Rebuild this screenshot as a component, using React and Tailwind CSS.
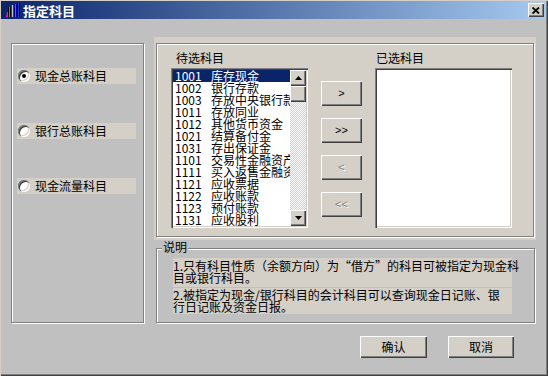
import React from "react";

const FONT = { fontFamily: '"Noto Sans CJK SC", "Liberation Sans", sans-serif' };

const raised =
  "bg-[#d4d0c8] shadow-[inset_1px_1px_0_#ffffff,inset_-1px_-1px_0_#404040,inset_-2px_-2px_0_#808080]";
const sunken =
  "shadow-[inset_1px_1px_0_#808080,inset_2px_2px_0_#404040,inset_-1px_-1px_0_#ffffff,inset_-2px_-2px_0_#d4d0c8]";
const etched = "border border-[#808080] shadow-[inset_1px_1px_0_#ffffff,1px_1px_0_#ffffff]";

const items = [
  ["1001", "库存现金"],
  ["1002", "银行存款"],
  ["1003", "存放中央银行款项"],
  ["1011", "存放同业"],
  ["1012", "其他货币资金"],
  ["1021", "结算备付金"],
  ["1031", "存出保证金"],
  ["1101", "交易性金融资产"],
  ["1111", "买入返售金融资产"],
  ["1121", "应收票据"],
  ["1122", "应收账款"],
  ["1123", "预付账款"],
  ["1131", "应收股利"],
];

function Radio({ checked, label }) {
  return (
    <div className="flex items-center h-[16px] w-[119px] bg-[#d4d0c8] pl-[1px]">
      <div
        className={`w-[12px] h-[12px] rounded-full bg-white flex items-center justify-center ${sunken}`}
      >
        {checked && <div className="w-[4px] h-[4px] rounded-full bg-black" />}
      </div>
      <span className="ml-[5px] text-[12px] leading-[12px] text-black">{label}</span>
    </div>
  );
}

function ArrowBtn({ children, disabled }) {
  return (
    <div
      className={`w-[41px] h-[25px] flex items-center justify-center ${raised} text-[11px] ${
        disabled ? "text-[#808080] [text-shadow:1px_1px_0_#ffffff]" : "text-black"
      }`}
      style={{ fontFamily: '"Liberation Sans", sans-serif' }}
    >
      {children}
    </div>
  );
}

function ScrollBtn({ up }) {
  return (
    <div className={`w-[16px] h-[16px] flex items-center justify-center ${raised}`}>
      <svg width="7" height="4" viewBox="0 0 7 4">
        {up ? <polygon points="3.5,0 7,4 0,4" fill="#000" /> : <polygon points="0,0 7,0 3.5,4" fill="#000" />}
      </svg>
    </div>
  );
}

export default function App() {
  return (
    <div
      className="w-[548px] h-[376px] bg-[#c0c0c0] flex flex-col overflow-hidden shadow-[inset_1px_1px_0_#d4d0c8,inset_-1px_-1px_0_#404040,inset_-2px_-2px_0_#808080]"
      style={FONT}
    >
      {/* Caption */}
      <div className="mt-[1px] mx-[1px] mr-[2px] h-[18px] flex items-center bg-[linear-gradient(to_right,#0a246a,#a6caf0)]">
        <svg width="17" height="16" viewBox="0 0 17 16" className="ml-[4px]">
          <polygon points="1,15 3,15 4,10 2,10" fill="#ff00ff" />
          <rect x="3" y="5" width="3" height="10" fill="#000" />
          <rect x="4" y="5" width="1" height="10" fill="#808080" />
          <rect x="6" y="3" width="3" height="12" fill="#404040" />
          <rect x="7" y="3" width="1" height="12" fill="#c0c0c0" />
          <rect x="9" y="2" width="3" height="13" fill="#0000a0" />
          <rect x="10" y="2" width="1" height="13" fill="#4060ff" />
          <rect x="12" y="1" width="3" height="14" fill="#000" />
          <rect x="13" y="1" width="1" height="14" fill="#2040c0" />
        </svg>
        <span className="ml-[1px] text-white font-bold text-[13px] leading-[13px]">指定科目</span>
        <div className="flex-1" />
        <div className={`w-[16px] h-[14px] mr-[2px] flex items-center justify-center ${raised}`}>
          <svg width="8" height="7" viewBox="0 0 8 7">
            <path d="M0.5,0.5 L7,6.5 M7,0.5 L0.5,6.5" stroke="#000" strokeWidth="1.8" />
          </svg>
        </div>
      </div>

      {/* Main row */}
      <div className="flex mt-[18px] pl-[11px]">
        {/* Left group */}
        <div className={`mt-[6px] w-[133px] h-[280px] ${etched} flex flex-col pl-[5px] pt-[24px] gap-[39px]`}>
          <Radio checked label="现金总账科目" />
          <Radio label="银行总账科目" />
          <Radio label="现金流量科目" />
        </div>

        {/* Right column */}
        <div className="ml-[10px] w-[382px] flex flex-col">
          <div className="h-[203px] bg-[#d4d0c8] pt-[6px] px-[2px] pb-[3px]">
            <div className={`h-full ${etched} flex pl-[14px]`}>
              {/* Candidate list */}
              <div className="flex flex-col">
                <div className="h-[24px] pt-[8px] pl-[5px] text-[12px] leading-[12px] text-black">待选科目</div>
                <div className={`w-[137px] h-[160px] bg-white p-[2px] flex ${sunken}`}>
                  <div className="w-[117px] flex flex-col overflow-hidden">
                    {items.map(([c, n], i) => (
                      <div
                        key={c}
                        className={`flex h-[12px] leading-[12px] text-[12px] whitespace-nowrap ${
                          i === 0 ? "bg-[#0a246a] text-white" : "text-black"
                        }`}
                      >
                        <span className="w-[38px] pl-[2px] shrink-0">{c}</span>
                        <span>{n}</span>
                      </div>
                    ))}
                  </div>
                  <div className="w-[16px] flex flex-col bg-[image:repeating-conic-gradient(#d4d0c8_0%_25%,#ffffff_0%_50%)] bg-[length:2px_2px]">
                    <ScrollBtn up />
                    <div className={`w-[16px] h-[16px] ${raised}`} />
                    <div className="flex-1" />
                    <ScrollBtn />
                  </div>
                </div>
              </div>

              {/* Buttons */}
              <div className="ml-[13px] pt-[37px] flex flex-col gap-[12px]">
                <ArrowBtn>&gt;</ArrowBtn>
                <ArrowBtn>&gt;&gt;</ArrowBtn>
                <ArrowBtn disabled>&lt;</ArrowBtn>
                <ArrowBtn disabled>&lt;&lt;</ArrowBtn>
              </div>

              {/* Selected list */}
              <div className="ml-[13px] flex flex-col">
                <div className="h-[24px] pt-[8px] pl-[1px] text-[12px] leading-[12px] text-black">已选科目</div>
                <div className={`w-[137px] h-[160px] bg-white ${sunken}`} />
              </div>
            </div>
          </div>

          {/* 说明 group */}
          <div className={`mt-[8px] ml-[2px] w-[379px] h-[75px] ${etched} flex flex-col`}>
            <div className="-mt-[8px] ml-[5px] self-start bg-[#c0c0c0] px-[1px] text-[12px] leading-[12px] text-black">
              说明
            </div>
            <div className="ml-[16px] mt-[5px] w-[339px] h-[29px] bg-[#d4d0c8] pt-[2px] text-[12px] leading-[12px] text-black whitespace-nowrap">
              1.只有科目性质（余额方向）为“借方”的科目可被指定为现金科
              <br />
              目或银行科目。
            </div>
            <div className="ml-[16px] mt-[1px] w-[339px] h-[26px] bg-[#d4d0c8] pt-[1px] text-[12px] leading-[12px] text-black whitespace-nowrap">
              2.被指定为现金/银行科目的会计科目可以查询现金日记账、银
              <br />
              行日记账及资金日报。
            </div>
          </div>
        </div>
      </div>

      {/* Bottom buttons */}
      <div className="flex mt-[13px] pl-[360px] gap-[21px]">
        <div className={`w-[67px] h-[22px] flex items-center justify-center text-[12px] text-black ${raised}`}>确认</div>
        <div className={`w-[66px] h-[22px] flex items-center justify-center text-[12px] text-black ${raised}`}>取消</div>
      </div>
    </div>
  );
}
